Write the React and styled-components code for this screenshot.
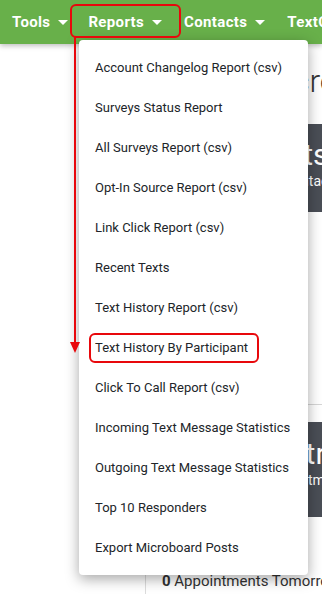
import React from 'react';
import styled, {createGlobalStyle} from 'styled-components';

const Global = createGlobalStyle`
  html, body {
    margin: 0;
    padding: 0;
    background: #fff;
    font-family: Roboto, "Liberation Sans", sans-serif;
    overflow: hidden;
  }
`;

const Page = styled.div`
  position: relative;
  width: 322px;
  height: 594px;
  overflow: hidden;
  display: flex;
  flex-direction: column;
`;

const NavBar = styled.div`
  height: 44px;
  flex: none;
  display: flex;
  align-items: center;
  gap: 20px;
  padding-left: 12px;
  background: #68b04a;
  box-shadow: 0 2px 5px rgba(0, 0, 0, 0.25);
  position: relative;
  z-index: 1;
  white-space: nowrap;
`;

const NavItem = styled.div`
  display: flex;
  align-items: center;
  gap: 8px;
  color: #fff;
  font-weight: 700;
  font-size: 15px;
  letter-spacing: 0.35px;
  margin-left: ${p => p.shift || 0}px;
`;

const Caret = styled.span`
  width: 0;
  height: 0;
  border-left: 5px solid transparent;
  border-right: 5px solid transparent;
  border-top: 5px solid #fff;
`;

const Body = styled.div`
  flex: 1;
  display: flex;
`;

const Sidebar = styled.div`
  width: 145px;
  flex: none;
  border-right: 1px solid #dcdcdc;
`;

const Content = styled.div`
  flex: 1;
  display: flex;
  flex-direction: column;
  padding: 18px 0 0 16px;
  white-space: nowrap;
`;

const Heading = styled.div`
  font-size: 32px;
  font-weight: 300;
  color: #333;
  line-height: 38px;
  margin-left: 96px;
`;

const Card = styled.div`
  background: #4a4e56;
  color: #fff;
  height: ${p => p.h}px;
  margin-top: ${p => p.mt}px;
  box-sizing: border-box;
  padding-top: ${p => p.pt}px;
  display: flex;
  flex-direction: column;
`;

const CardBig = styled.div`
  font-size: 30px;
  line-height: 34px;
  padding-left: ${p => p.pl}px;
`;

const CardSmall = styled.div`
  font-size: 14px;
  line-height: 18px;
  padding-left: ${p => p.pl}px;
`;

const Divider = styled.div`
  height: 1px;
  background: #d6d6d6;
  margin-top: 192px;
`;

const Footer = styled.div`
  margin-top: auto;
  padding-bottom: 4px;
  font-size: 15px;
  color: #333;
`;

const Menu = styled.div`
  position: absolute;
  left: 79px;
  top: 40px;
  width: 229px;
  padding: 7px 0 8px;
  background: #fff;
  border-radius: 4px;
  box-shadow: 0 4px 14px rgba(0, 0, 0, 0.35);
  z-index: 2;
`;

const MenuItem = styled.div`
  height: 40px;
  display: flex;
  align-items: center;
  padding-left: 16px;
  font-size: 13px;
  color: #212529;
  white-space: nowrap;
`;

const Mark = styled.div`
  position: absolute;
  left: ${p => p.x}px;
  top: ${p => p.y}px;
  width: ${p => p.w}px;
  height: ${p => p.h}px;
  border: 2px solid #e8080c;
  border-radius: 6px;
  box-sizing: border-box;
  z-index: 3;
`;

const Arrow = styled.svg`
  position: absolute;
  left: 69px;
  top: 36px;
  z-index: 3;
`;

const items = [
  'Account Changelog Report (csv)',
  'Surveys Status Report',
  'All Surveys Report (csv)',
  'Opt-In Source Report (csv)',
  'Link Click Report (csv)',
  'Recent Texts',
  'Text History Report (csv)',
  'Text History By Participant',
  'Click To Call Report (csv)',
  'Incoming Text Message Statistics',
  'Outgoing Text Message Statistics',
  'Top 10 Responders',
  'Export Microboard Posts',
];

export default function App() {
  return (
    <Page>
      <Global />
      <NavBar>
        <NavItem>Tools <Caret /></NavItem>
        <NavItem>Reports <Caret /></NavItem>
        <NavItem shift={2}>Contacts <Caret /></NavItem>
        <NavItem shift={2}>TextC</NavItem>
      </NavBar>
      <Body>
        <Sidebar />
        <Content>
          <Heading>Micro</Heading>
          <Card h={88} mt={24} pt={14}>
            <CardBig pl={94}>Texts</CardBig>
            <CardSmall pl={122}>Contacts</CardSmall>
          </Card>
          <Divider />
          <Card h={95} mt={17} pt={15}>
            <CardBig pl={110}>Entries</CardBig>
            <CardSmall pl={102}>Appointments</CardSmall>
          </Card>
          <Footer><b>0</b> Appointments Tomorrow</Footer>
        </Content>
      </Body>
      <Menu>
        {items.map((item, i) => (
          <MenuItem key={i}>{item}</MenuItem>
        ))}
      </Menu>
      <Mark x={70} y={4} w={111} h={34} />
      <Mark x={89} y={333} w={170} h={30} />
      <Arrow width="14" height="320" viewBox="0 0 14 320">
        <line x1="6" y1="0" x2="6" y2="308" stroke="#e8080c" strokeWidth="2" />
        <polygon points="1,306 11,306 6,317" fill="#e8080c" />
      </Arrow>
    </Page>
  );
}
